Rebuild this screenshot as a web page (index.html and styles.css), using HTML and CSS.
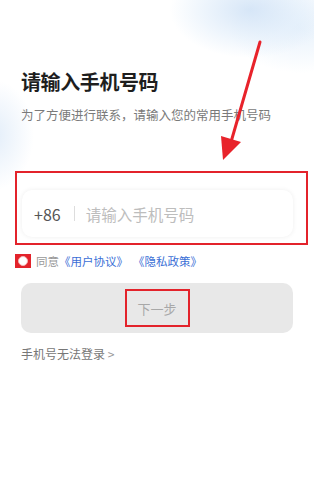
FILE: index.html
```html
<!DOCTYPE html>
<html lang="zh-CN">

<head>
    <meta charset="UTF-8">
    <meta name="viewport" content="width=device-width, initial-scale=1.0">
    <title>手机号登录</title>
    <link rel="stylesheet" href="styles.css">
</head>

<body>
    <div class="page">
        <h1 class="title">请输入手机号码</h1>
        <p class="subtitle">为了方便进行联系，请输入您的常用手机号码</p>

        <!-- highlighted phone field -->
        <div class="mark-box">
            <div class="phone-input">
                <span class="code">+86</span>
                <span class="divider"></span>
                <span class="placeholder">请输入手机号码</span>
            </div>
        </div>

        <div class="agree">
            <span class="check"><span class="dot"></span></span>
            <span class="agree-text">同意</span>
            <a class="link">《用户协议》</a>
            <a class="link">《隐私政策》</a>
        </div>

        <div class="next-btn">
            <span class="next-mark">下一步</span>
        </div>

        <div class="cant-login">手机号无法登录 <span class="chev">&gt;</span></div>

        <!-- annotation arrow -->
        <svg class="arrow" width="60" height="130" viewBox="0 0 60 130">
            <line x1="48" y1="2" x2="19" y2="102" stroke="#e8232b" stroke-width="3" stroke-linecap="round" />
            <polygon points="11,120 9,96 29,102" fill="#e8232b" />
        </svg>
    </div>
</body>

</html>
```

FILE: styles.css
```css
/* styles.css */
body {
    margin: 0;
    font-family: "Noto Sans CJK SC", "Noto Sans", sans-serif;
    background-color: #fff;
}

.page {
    position: relative;
    width: 314px;
    height: 487px;
    padding: 67px 0 0;
    box-sizing: border-box;
    overflow: hidden;
    background:
        radial-gradient(ellipse 80px 48px at 250px 10px, rgba(208, 226, 246, 0.85), rgba(222, 236, 250, 0.5) 60%, rgba(255, 255, 255, 0) 100%),
        radial-gradient(ellipse 70px 45px at 300px 28px, rgba(222, 236, 250, 0.7), rgba(255, 255, 255, 0) 100%),
        radial-gradient(ellipse 40px 55px at -6px 135px, rgba(218, 232, 248, 0.75), rgba(255, 255, 255, 0) 100%),
        #fff;
}

.title {
    margin: 0 0 0 21px;
    font-size: 20px;
    line-height: 30px;
    font-weight: 700;
    color: #1e1e1e;
    letter-spacing: -0.4px;
}

.subtitle {
    margin: 9px 0 0 21px;
    font-size: 12.5px;
    line-height: 18px;
    color: #7a7a7a;
}

.mark-box {
    margin: 47px 0 0 15px;
    width: 293px;
    height: 74px;
    border: 2px solid #e3232b;
    padding: 17px 13px 6px 5px;
    box-sizing: border-box;
}

.phone-input {
    display: flex;
    align-items: center;
    height: 47px;
    padding-left: 12px;
    border-radius: 10px;
    background-color: #fff;
    box-shadow: 0 0 5px rgba(0, 0, 0, 0.07);
}

.code {
    font-size: 16px;
    color: #555;
}

.divider {
    width: 1px;
    height: 15px;
    margin: 0 11px 0 13px;
    background-color: #ddd;
}

.placeholder {
    font-size: 15.5px;
    color: #bdbdbd;
}

.agree {
    display: flex;
    align-items: center;
    margin: 8px 0 0 15px;
    height: 16px;
    font-size: 11.5px;
}

.check {
    display: flex;
    align-items: center;
    justify-content: center;
    width: 16px;
    height: 14px;
    background-color: #e3232b;
}

.dot {
    width: 8px;
    height: 8px;
    border-radius: 50%;
    background-color: #fff;
    border: 1px solid #f5b5b5;
}

.agree-text {
    margin-left: 5px;
    color: #999;
}

.link {
    color: #3b6fd6;
}

.link + .link {
    margin-left: 5px;
}

.next-btn {
    display: flex;
    align-items: center;
    justify-content: center;
    margin: 14px 21px 0;
    height: 50px;
    border-radius: 10px;
    background-color: #e8e8e8;
}

.next-mark {
    display: flex;
    align-items: center;
    justify-content: center;
    width: 61px;
    height: 34px;
    border: 2px solid #e3232b;
    font-size: 13px;
    color: #a8a8a8;
}

.cant-login {
    margin: 12px 0 0 21px;
    font-size: 12px;
    line-height: 18px;
    color: #777;
}

.chev {
    color: #999;
}

.arrow {
    position: absolute;
    left: 212px;
    top: 40px;
}
```
